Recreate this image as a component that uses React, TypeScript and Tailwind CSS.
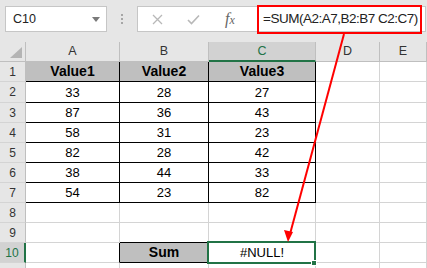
import React from "react";

const colWidths = ["w-[94px]", "w-[89px]", "w-[107px]", "w-[64px]", "flex-1"];
const colLetters = ["A", "B", "C", "D", "E"];

const tableRows = [
  ["Value1", "Value2", "Value3"],
  ["33", "28", "27"],
  ["87", "36", "43"],
  ["58", "31", "23"],
  ["82", "28", "42"],
  ["38", "44", "33"],
  ["54", "23", "82"],
];

// which cells carry a black right / bottom border (row 1-based, col 0-based)
function rightBlack(r: number, c: number) {
  if (r >= 1 && r <= 7 && c <= 2) return true;
  if (r === 10 && (c === 0 || c === 1)) return true;
  return false;
}
function bottomBlack(r: number, c: number) {
  if (r >= 1 && r <= 7 && c <= 2) return true;
  if ((r === 9 || r === 10) && c === 1) return true;
  return false;
}

function cellText(r: number, c: number) {
  if (r >= 1 && r <= 7 && c <= 2) return tableRows[r - 1][c];
  if (r === 10 && c === 1) return "Sum";
  if (r === 10 && c === 2) return "#NULL!";
  return "";
}

function Cell({ r, c }: { r: number; c: number }) {
  const text = cellText(r, c);
  const bold = r === 1 && c <= 2 ? true : r === 10 && c === 1;
  return (
    <div
      className={[
        colWidths[c],
        "h-full flex items-end justify-center pb-[3px] border-r border-b leading-none text-black",
        rightBlack(r, c) ? "border-r-black" : "border-r-[#d4d4d4]",
        bottomBlack(r, c) ? "border-b-black" : "border-b-[#d4d4d4]",
        bold ? "bg-[#bfbfbf] font-bold text-[14px]" : "bg-white text-[13px]",
      ].join(" ")}
    >
      {text}
    </div>
  );
}

function Row({ r }: { r: number }) {
  const selected = r === 10;
  return (
    <div className={(r === 2 ? "h-[21px]" : "h-[20px]") + " flex shrink-0"}>
      <div
        className={[
          "w-[26px] shrink-0 h-full flex items-center justify-center text-[12px] border-b border-b-[#d4d4d4]",
          selected
            ? "bg-[#d2d2d2] text-[#217346] border-r-2 border-r-[#217346]"
            : "bg-[#e6e6e6] text-[#333] border-r border-r-[#bfbfbf]",
        ].join(" ")}
      >
        {r < 11 ? r : ""}
      </div>
      {[0, 1, 2, 3, 4].map((c) => (
        <Cell key={c} r={r} c={c} />
      ))}
    </div>
  );
}

export default function App() {
  return (
    <div className="relative w-[427px] h-[268px] overflow-hidden bg-[#e6e6e6] font-['Liberation_Sans',Arial,sans-serif]">
      {/* formula bar */}
      <div className="h-[42px] flex items-start pt-[6px] pl-[5px] pr-[1px]">
        <div className="w-[102px] h-[26px] bg-white border border-[#c6c6c6] flex items-center pl-[7px] pr-[6px]">
          <span className="text-[12.5px] text-[#222] flex-1">C10</span>
          <svg width="8" height="5" viewBox="0 0 8 5">
            <path d="M0 0 L8 0 L4 5 Z" fill="#7a7a7a" />
          </svg>
        </div>
        <div className="w-[30px] h-[26px] flex flex-col items-center justify-center gap-[2px]">
          <div className="w-[2px] h-[2px] bg-[#a6a6a6]" />
          <div className="w-[2px] h-[2px] bg-[#a6a6a6]" />
          <div className="w-[2px] h-[2px] bg-[#a6a6a6]" />
        </div>
        <div className="flex-1 h-[26px] bg-white border border-[#c6c6c6] flex items-center whitespace-nowrap">
          <div className="w-[38px] flex justify-center">
            <svg width="11" height="11" viewBox="0 0 11 11">
              <path d="M1 1 L10 10 M10 1 L1 10" stroke="#b8b8b8" strokeWidth="1.3" />
            </svg>
          </div>
          <div className="w-[34px] flex justify-center">
            <svg width="13" height="11" viewBox="0 0 13 11">
              <path d="M1 6 L4.5 9.5 L12 1.5" stroke="#b8b8b8" strokeWidth="1.6" fill="none" />
            </svg>
          </div>
          <div className="w-[40px] text-center font-['Liberation_Serif',serif] italic text-[#666] leading-none">
            <span className="text-[16px]">f</span>
            <span className="text-[12px]">x</span>
          </div>
          <div className="pl-[13px] text-[13.5px] text-[#222] tracking-[-0.5px]">
            =SUM(A2:A7,B2:B7 C2:C7)
          </div>
        </div>
      </div>

      {/* column headers */}
      <div className="h-[20px] flex">
        <div className="w-[26px] h-full bg-[#e6e6e6] border-r border-b border-[#bfbfbf] flex items-end justify-end pr-[3px] pb-[3px]">
          <svg width="12" height="11" viewBox="0 0 12 11">
            <path d="M12 0 L12 11 L0 11 Z" fill="#b4b4b4" />
          </svg>
        </div>
        {colLetters.map((l, i) => (
          <div
            key={l}
            className={[
              colWidths[i],
              "h-full flex items-center justify-center text-[12.5px] border-r border-r-[#bfbfbf]",
              i === 2
                ? "bg-[#d2d2d2] text-[#217346] border-b-2 border-b-[#217346]"
                : "bg-[#e6e6e6] text-[#333] border-b border-b-[#bfbfbf]",
            ].join(" ")}
          >
            {l}
          </div>
        ))}
      </div>

      {/* rows */}
      <div className="flex flex-col">
        {[1, 2, 3, 4, 5, 6, 7, 8, 9, 10, 11].map((r) => (
          <Row key={r} r={r} />
        ))}
      </div>

      {/* selection on C10 */}
      <div className="absolute left-[207px] top-[241px] w-[109px] h-[23px] border-2 border-[#217346]" />
      <div className="absolute left-[311px] top-[260px] w-[6px] h-[6px] bg-[#217346] border border-white" />

      {/* red highlight box and arrow */}
      <div className="absolute left-[257px] top-[5px] w-[165px] h-[29px] border-2 border-[#ff0000]" />
      <svg className="absolute inset-0 pointer-events-none" width="427" height="268" viewBox="0 0 427 268">
        <line x1="344" y1="34" x2="290" y2="234" stroke="#ff0000" strokeWidth="2" />
        <path d="M288 242 L284 230 L293 232 Z" fill="#ff0000" />
      </svg>
    </div>
  );
}
